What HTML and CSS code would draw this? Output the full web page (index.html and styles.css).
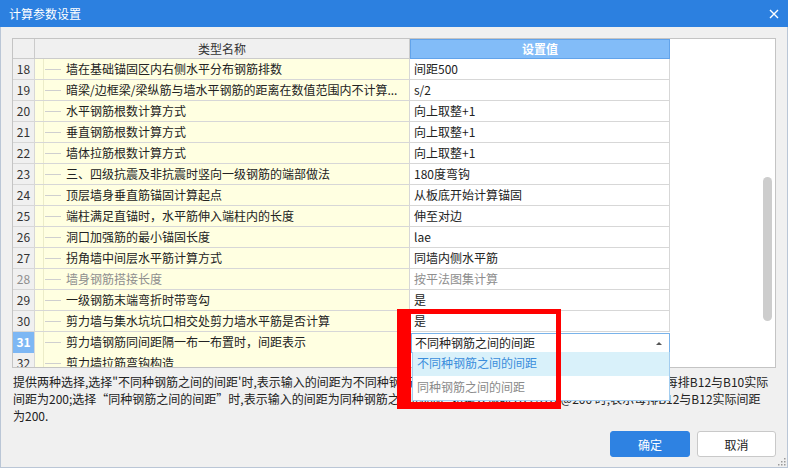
FILE: index.html
```html
<!DOCTYPE html>
<html lang="zh-CN">
<head>
<meta charset="utf-8">
<title>计算参数设置</title>
<link rel="stylesheet" href="styles.css">
</head>
<body>
<div class="dialog">
  <div class="titlebar">
    <span class="title">计算参数设置</span>
    <svg class="close" width="10" height="10" viewBox="0 0 10 10"><path d="M1 1L9 9M9 1L1 9" stroke="#fff" stroke-width="1.4" fill="none"/></svg>
  </div>
  <div class="content">
    <div class="grid">
      <div class="rows">
        <div class="row head">
          <div class="c num"></div>
          <div class="c name">类型名称</div>
          <div class="c val">设置值</div>
        </div>
        <div class="row"><div class="c num">18</div><div class="c name"><span>墙在基础锚固区内右侧水平分布钢筋排数</span></div><div class="c val">间距500</div></div>
        <div class="row"><div class="c num">19</div><div class="c name"><span>暗梁/边框梁/梁纵筋与墙水平钢筋的距离在数值范围内不计算...</span></div><div class="c val">s/2</div></div>
        <div class="row"><div class="c num">20</div><div class="c name"><span>水平钢筋根数计算方式</span></div><div class="c val">向上取整+1</div></div>
        <div class="row"><div class="c num">21</div><div class="c name"><span>垂直钢筋根数计算方式</span></div><div class="c val">向上取整+1</div></div>
        <div class="row"><div class="c num">22</div><div class="c name"><span>墙体拉筋根数计算方式</span></div><div class="c val">向上取整+1</div></div>
        <div class="row"><div class="c num">23</div><div class="c name"><span>三、四级抗震及非抗震时竖向一级钢筋的端部做法</span></div><div class="c val">180度弯钩</div></div>
        <div class="row"><div class="c num">24</div><div class="c name"><span>顶层墙身垂直筋锚固计算起点</span></div><div class="c val">从板底开始计算锚固</div></div>
        <div class="row"><div class="c num">25</div><div class="c name"><span>端柱满足直锚时，水平筋伸入端柱内的长度</span></div><div class="c val">伸至对边</div></div>
        <div class="row"><div class="c num">26</div><div class="c name"><span>洞口加强筋的最小锚固长度</span></div><div class="c val">lae</div></div>
        <div class="row"><div class="c num">27</div><div class="c name"><span>拐角墙中间层水平筋计算方式</span></div><div class="c val">同墙内侧水平筋</div></div>
        <div class="row disabled"><div class="c num">28</div><div class="c name"><span>墙身钢筋搭接长度</span></div><div class="c val">按平法图集计算</div></div>
        <div class="row"><div class="c num">29</div><div class="c name"><span>一级钢筋末端弯折时带弯勾</span></div><div class="c val">是</div></div>
        <div class="row"><div class="c num">30</div><div class="c name"><span>剪力墙与集水坑坑口相交处剪力墙水平筋是否计算</span></div><div class="c val">是</div></div>
        <div class="row current"><div class="c num">31</div><div class="c name"><span>剪力墙钢筋同间距隔一布一布置时，间距表示</span></div><div class="c val combo-cell"><div class="combo"><span>不同种钢筋之间的间距</span><i class="arrow"></i></div></div></div>
        <div class="row"><div class="c num">32</div><div class="c name"><span>剪力墙拉筋弯钩构造</span></div><div class="c val"></div></div>
      </div>
      <div class="scroll"><div class="thumb"></div></div>
    </div>
    <p class="desc">提供两种选择,选择"不同种钢筋之间的间距'时,表示输入的间距为不同种钢筋之间的间距,如输入钢筋为B12/B10@200时,表示每排B12与B10实际<br>间距为200;选择“同种钢筋之间的间距”时,表示输入的间距为同种钢筋之间的间距,如输入钢筋 B12/B10@200 时,表示每排B12与B12实际间距<br>为200.</p>
  </div>
  <div class="footer">
    <button class="btn primary">确定</button>
    <button class="btn">取消</button>
  </div>

  <div class="popup">
    <div class="opt active">不同种钢筋之间的间距</div>
    <div class="opt">同种钢筋之间的间距</div>
  </div>
  <div class="mark"></div>
  <svg class="grip" width="10" height="10" viewBox="0 0 10 10">
    <rect x="8" y="2" width="1.5" height="1.5" fill="#9a9a9a"/>
    <rect x="5" y="5" width="1.5" height="1.5" fill="#9a9a9a"/>
    <rect x="8" y="5" width="1.5" height="1.5" fill="#9a9a9a"/>
    <rect x="2" y="8" width="1.5" height="1.5" fill="#9a9a9a"/>
    <rect x="5" y="8" width="1.5" height="1.5" fill="#9a9a9a"/>
    <rect x="8" y="8" width="1.5" height="1.5" fill="#9a9a9a"/>
  </svg>
</div>
</body>
</html>
```

FILE: styles.css
```css
* { box-sizing: border-box; }
html, body { margin: 0; padding: 0; }
body {
  font-family: "Noto Sans CJK SC", "Noto Sans", sans-serif;
  font-size: 12px;
  color: #222;
  background: #f0f0f0;
}
.dialog {
  position: relative;
  width: 788px;
  height: 468px;
  background: #f0f0f0;
  border: 1px solid #bac6d6;
  border-top: none;
  display: flex;
  flex-direction: column;
}
.titlebar {
  height: 27px;
  flex: none;
  background: #2c80e0;
  color: #fff;
  display: flex;
  align-items: center;
  justify-content: space-between;
  padding: 0 8px 0 8px;
  margin: 0 -1px;
}
.title { font-size: 12px; line-height: 27px; padding-left: 1px; }
.close { display: block; margin-right: 1px; }

.content { padding: 11px 11px 0 11px; }
.grid {
  height: 330px;
  border: 1px solid #c4c4c4;
  background: #fff;
  display: flex;
}
.rows { flex: 1; overflow: hidden; }
.row {
  display: grid;
  grid-template-columns: 22px 375px 260px;
  height: 21px;
  line-height: 20px;
}
.c {
  border-right: 1px solid #d7d7d7;
  border-bottom: 1px solid #d7d7d7;
  white-space: nowrap;
  overflow: hidden;
}
.num { background: #f0f0f0; text-align: center; color: #333; font-size: 12px; }
.name {
  background: #ffffe1;
  position: relative;
  padding-left: 31px;
}
.row .name::before {
  content: "";
  position: absolute;
  left: 8px; top: 0; bottom: 0;
  width: 1px;
  background: #ececc8;
}
.row .name::after {
  content: "";
  position: absolute;
  left: 10px; top: 10px;
  width: 16px; height: 1px;
  background: #cfcfcf;
}
.val { background: #fff; padding-left: 4px; }

.row.head { height: 20px; line-height: 19px; }
.head .c { background: #f0f0f0; border-color: #cbcbcb; }
.head .name { padding-left: 0; text-align: center; color: #333; }
.head .name::before, .head .name::after { display: none; }
.head .val {
  background: #82bcf8;
  border: 1px solid #62a3ea;
  color: #fff;
  font-weight: bold;
  text-align: center;
  padding-left: 0;
  line-height: 17px;
}

.disabled .c { color: #8e8e8e; }
.current .num { background: #7db7f4; color: #fff; font-weight: bold; }

.combo-cell { padding: 1px 0 0 1px; border-right: none; overflow: visible; }
.combo {
  height: 20px;
  border: 1px solid #7ab3ea;
  display: flex;
  align-items: center;
  padding-left: 3px;
  line-height: 18px;
  background: #fff;
}
.arrow {
  margin-left: auto;
  margin-right: 7px;
  width: 0; height: 0;
  border-left: 3px solid transparent;
  border-right: 3px solid transparent;
  border-bottom: 3px solid #555;
}

.scroll { width: 12px; flex: none; padding-top: 138px; }
.thumb { width: 9px; height: 144px; background: #cdcdcd; border-radius: 5px; }

.desc {
  margin: 5px 0 0 1px;
  line-height: 17px;
  font-size: 12px;
  color: #222;
  white-space: nowrap;
  overflow: hidden;
}

.footer {
  margin-top: auto;
  display: flex;
  justify-content: flex-end;
  gap: 7px;
  padding: 0 11px 10px 0;
}
.btn {
  height: 26px;
  width: 79px;
  font-family: inherit;
  font-size: 12px;
  border-radius: 3px;
  border: 1px solid #c9c9c9;
  background: #fff;
  color: #222;
  padding: 0;
}
.btn.primary { width: 80px; background: #2e82e2; border-color: #2e82e2; color: #fff; }

.popup {
  position: absolute;
  left: 411px;
  top: 352px;
  width: 258px;
  height: 49px;
  background: #fff;
  border: 1px solid #a3cdef;
  border-top: none;
  z-index: 2;
}
.opt { height: 24px; line-height: 22px; padding-left: 4px; color: #8a8a8a; }
.opt.active { background: #d9f1fa; color: #3a8ddc; }

.mark {
  position: absolute;
  left: 396px;
  top: 309px;
  width: 164px;
  height: 100px;
  border-style: solid;
  border-color: #ff0000;
  border-width: 5px 5px 7px 14px;
  z-index: 3;
}
.grip { position: absolute; right: 1px; bottom: 1px; }
```
